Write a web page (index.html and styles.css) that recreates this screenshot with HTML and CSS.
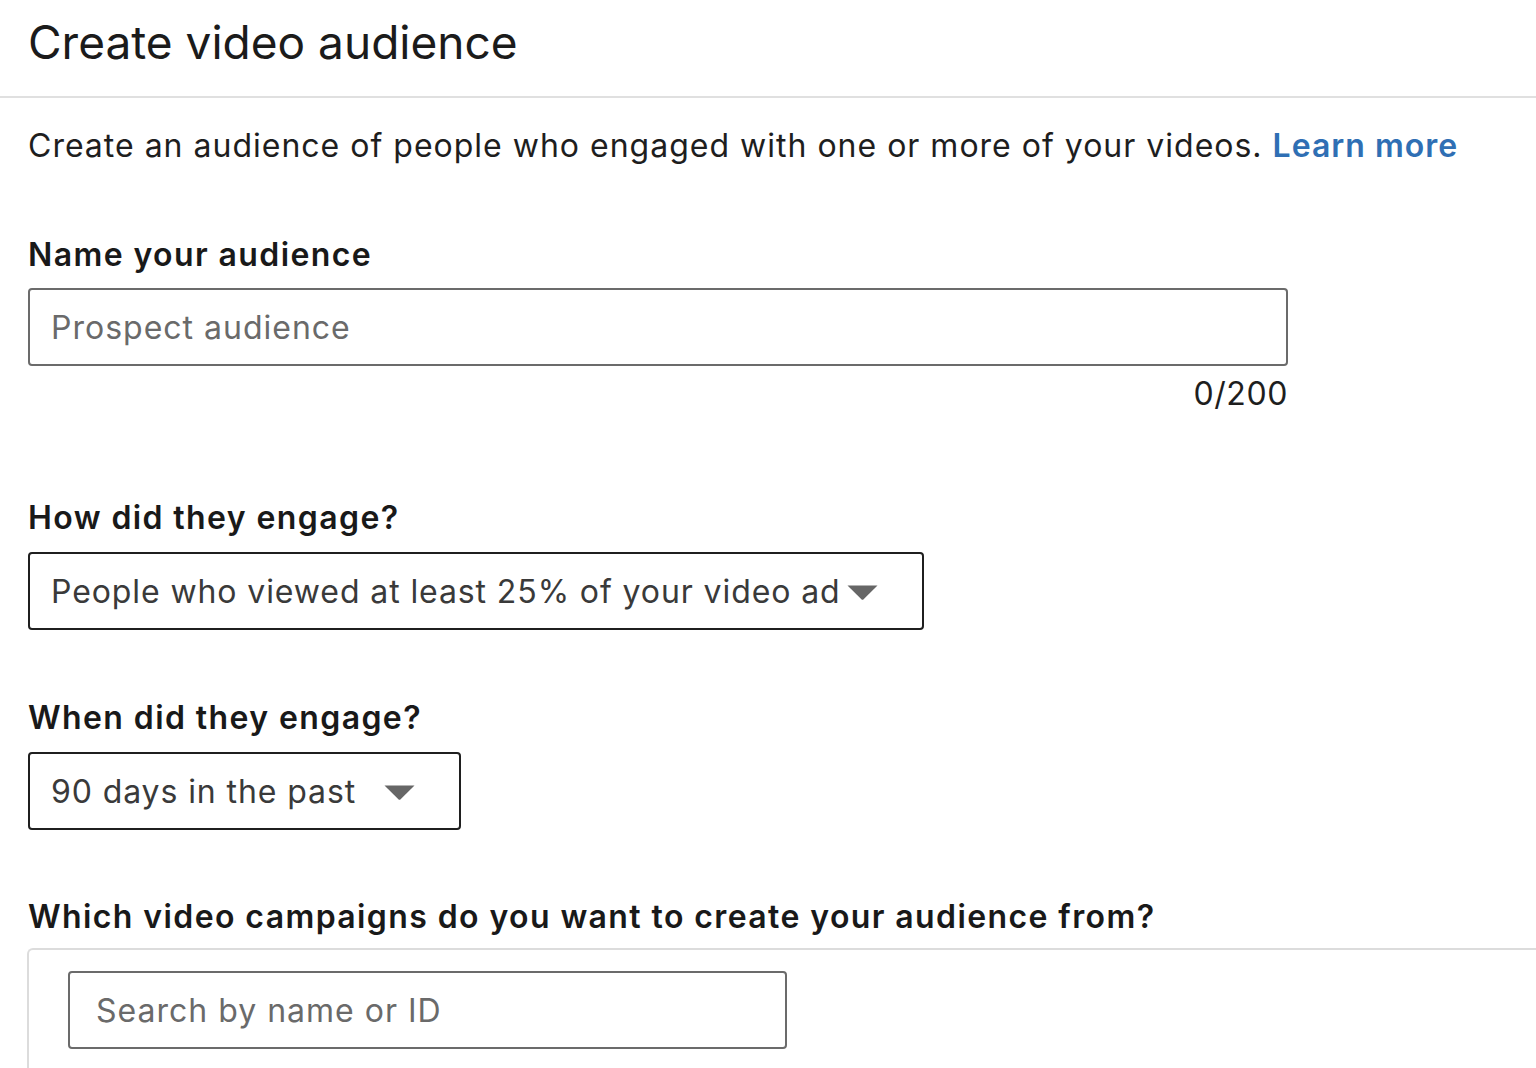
FILE: index.html
```html
<!DOCTYPE html>
<html lang="en">
<head>
<meta charset="utf-8">
<title>Create video audience</title>
<link rel="stylesheet" href="styles.css">
</head>
<body>
<header class="page-header">
  <h1 class="page-title">Create video audience</h1>
</header>
<main class="content">
  <p class="intro">Create an audience of people who engaged with one or more of your videos. <a class="link" href="#">Learn more</a></p>

  <section class="field field-name">
    <label class="field-label" for="aud-name">Name your audience</label>
    <div class="text-input">
      <input id="aud-name" class="text-input-el" type="text" placeholder="Prospect audience">
    </div>
    <div class="counter">0/200</div>
  </section>

  <section class="field field-how">
    <div class="field-label">How did they engage?</div>
    <div class="select select-wide">
      <span class="select-text">People who viewed at least 25% of your video ad</span>
      <svg class="caret" width="31" height="15" viewBox="0 0 31 15"><path d="M0.5 0.5 H30.5 L16.6 14.2 Q15.5 15.2 14.4 14.2 Z" fill="#666"/></svg>
    </div>
  </section>

  <section class="field field-when">
    <div class="field-label">When did they engage?</div>
    <div class="select select-narrow">
      <span class="select-text">90 days in the past</span>
      <svg class="caret" width="31" height="15" viewBox="0 0 31 15"><path d="M0.5 0.5 H30.5 L16.6 14.2 Q15.5 15.2 14.4 14.2 Z" fill="#666"/></svg>
    </div>
  </section>

  <section class="field field-which">
    <div class="field-label">Which video campaigns do you want to create your audience from?</div>
    <div class="campaign-box">
      <div class="search-input">
        <input class="text-input-el" type="text" placeholder="Search by name or ID">
      </div>
    </div>
  </section>
</main>
</body>
</html>
```

FILE: styles.css
```css
html, body {
  margin: 0;
  padding: 0;
  background: #fff;
  overflow: hidden;
}
body {
  width: 1536px;
  height: 1068px;
  font-family: "Inter", "Liberation Sans", sans-serif;
  color: #191919;
}
.page-header {
  height: 96px;
  border-bottom: 2px solid #e0e0e0;
  padding: 0 28px;
  display: flex;
  align-items: center;
}
.page-title {
  margin: 0;
  font-size: 46px;
  font-weight: 400;
  line-height: 56px;
  color: #1b1b1b;
  letter-spacing: 0;
  position: relative;
  top: -6px;
}
.content {
  padding-left: 28px;
}
.intro {
  margin: 28px 0 0;
  font-size: 32px;
  line-height: 40px;
  letter-spacing: 1px;
  color: #1e1e1e;
}
.link {
  color: #2f6fb4;
  font-weight: 600;
  text-decoration: none;
}
.field-label {
  display: block;
  font-size: 32px;
  line-height: 40px;
  font-weight: 600;
  letter-spacing: 1.4px;
  color: #191919;
}
.field-name { margin-top: 69px; }
.field-name .field-label { margin-bottom: 13px; }
.text-input {
  width: 1256px;
  height: 74px;
  border: 2px solid #6b6b6b;
  border-radius: 4px;
  box-sizing: content-box;
  display: flex;
  align-items: center;
}
.text-input-el {
  border: 0;
  outline: 0;
  background: transparent;
  width: 100%;
  padding: 0 0 0 21px;
  font-family: inherit;
  font-size: 32px;
  letter-spacing: 1px;
  color: #333;
}
.text-input-el::placeholder {
  color: #6a6a6a;
  opacity: 1;
}
.counter {
  width: 1260px;
  text-align: right;
  margin-top: 8px;
  font-size: 32px;
  line-height: 40px;
  letter-spacing: 0.6px;
  color: #1e1e1e;
}
.field-how { margin-top: 84px; }
.field-when { margin-top: 68px; }
.field-which { margin-top: 67px; }
.field-how .field-label,
.field-when .field-label { margin-bottom: 14px; }
.select {
  height: 74px;
  border: 2px solid #1f1f1f;
  border-radius: 4px;
  display: flex;
  align-items: center;
  padding: 0 44px 0 21px;
  box-sizing: content-box;
  font-size: 32px;
  letter-spacing: 0.9px;
  color: #3a3a3a;
}
.select-wide { width: 827px; }
.select-narrow { width: 364px; }
.select-text {
  flex: 1;
  white-space: nowrap;
}
.caret {
  flex: none;
  margin-top: 2px;
  margin-left: 2px;
}
.field-which .field-label { margin-bottom: 11px; }
.campaign-box {
  margin-left: -1px;
  height: 120px;
  border: 2px solid #dcdcdc;
  border-right: 0;
  border-bottom: 0;
  border-top-left-radius: 6px;
  padding: 21px 0 0 39px;
  box-sizing: border-box;
}
.search-input {
  width: 715px;
  height: 74px;
  border: 2px solid #6b6b6b;
  border-radius: 4px;
  display: flex;
  align-items: center;
}
.search-input .text-input-el { padding-left: 26px; }
```
